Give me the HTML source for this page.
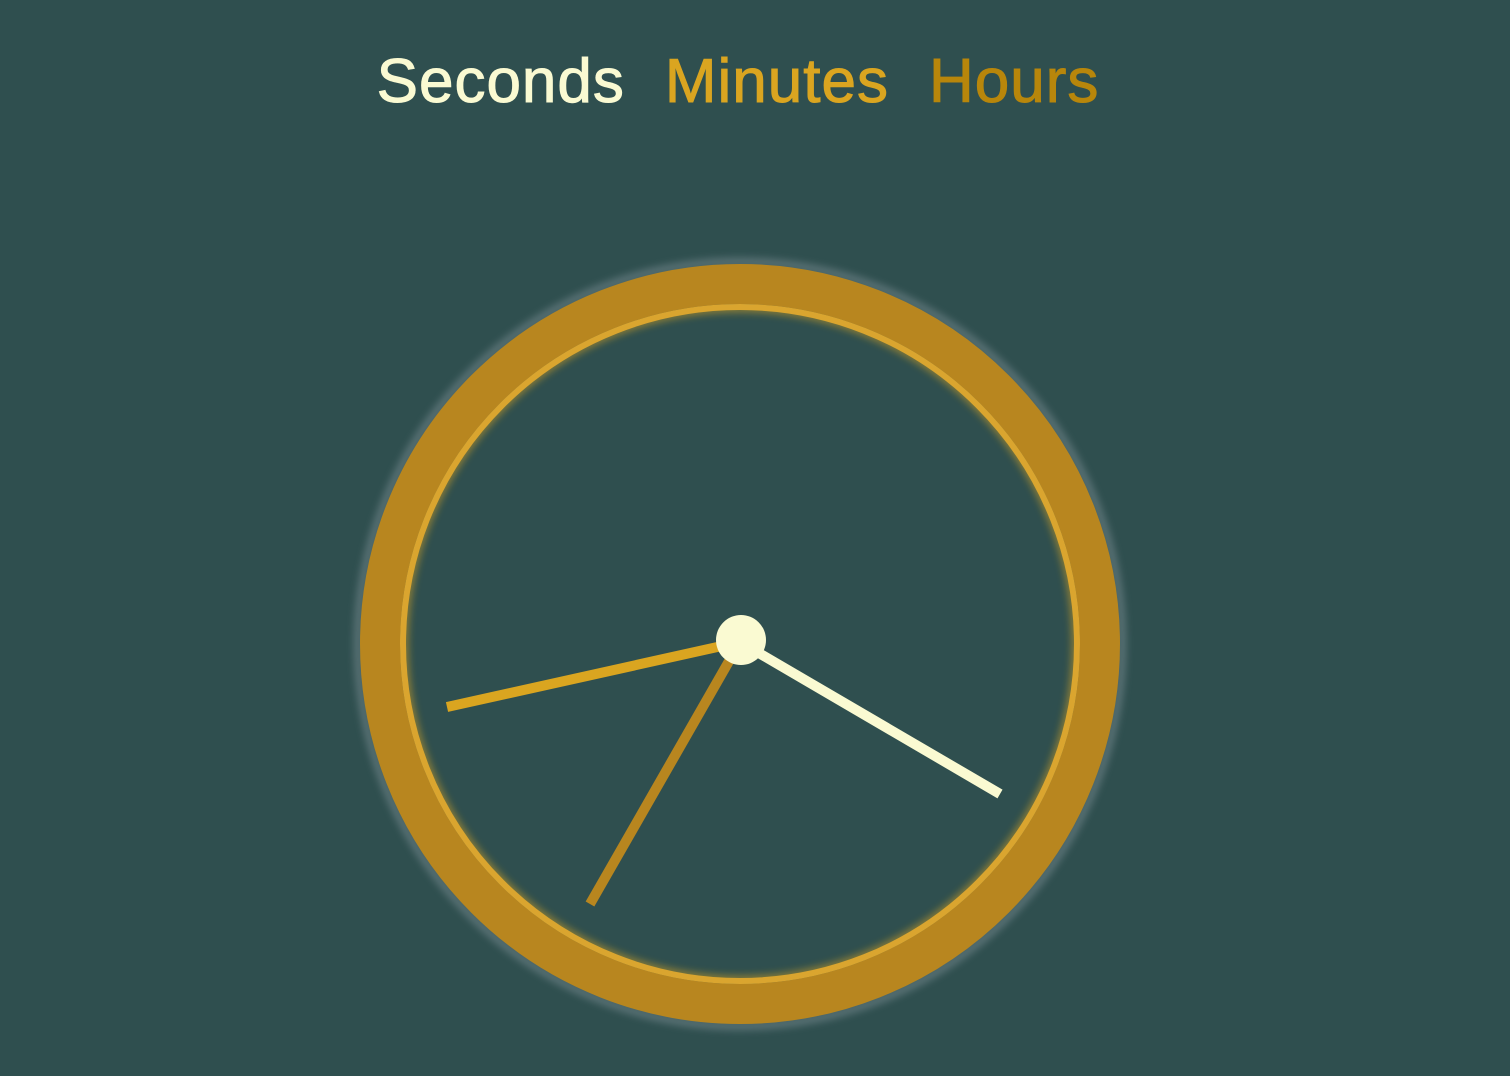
<!DOCTYPE html>
<html><head><style>
html,body{margin:0;padding:0;width:1510px;height:1076px;background:#2f4f4f;overflow:hidden}
.t{position:absolute;top:46px;left:-2px;width:1480px;text-align:center;font-family:"Liberation Sans",sans-serif;font-size:62px;white-space:nowrap;letter-spacing:1px}
.t span{margin:0 20px;-webkit-text-stroke:1px currentColor}
</style></head><body>
<div class="t"><span style="color:#fafad2">Seconds</span><span style="color:#daa520">Minutes</span><span style="color:#b8860b">Hours</span></div>
<svg width="1510" height="1076" style="position:absolute;left:0;top:0">
<defs><filter id="g" x="-20%" y="-20%" width="140%" height="140%"><feGaussianBlur stdDeviation="4"/></filter></defs>
<circle cx="740" cy="644" r="382" fill="none" stroke="#8a9aa0" stroke-width="8" opacity="0.5" filter="url(#g)"/>
<circle cx="740" cy="644" r="336" fill="none" stroke="#daa520" stroke-width="8" opacity="0.6" filter="url(#g)"/>
<circle cx="740" cy="644" r="360" fill="none" stroke="#b8861f" stroke-width="40"/>
<circle cx="740" cy="644" r="337" fill="none" stroke="#daa52f" stroke-width="6"/>
<line x1="740" y1="642" x2="447" y2="707" stroke="#daa520" stroke-width="10"/>
<line x1="740" y1="642" x2="590" y2="904" stroke="#b8861f" stroke-width="10"/>
<line x1="740" y1="642" x2="1000" y2="794" stroke="#fafad2" stroke-width="10"/>
<circle cx="741" cy="640" r="25" fill="#fafad2"/>
</svg>
</body></html>
